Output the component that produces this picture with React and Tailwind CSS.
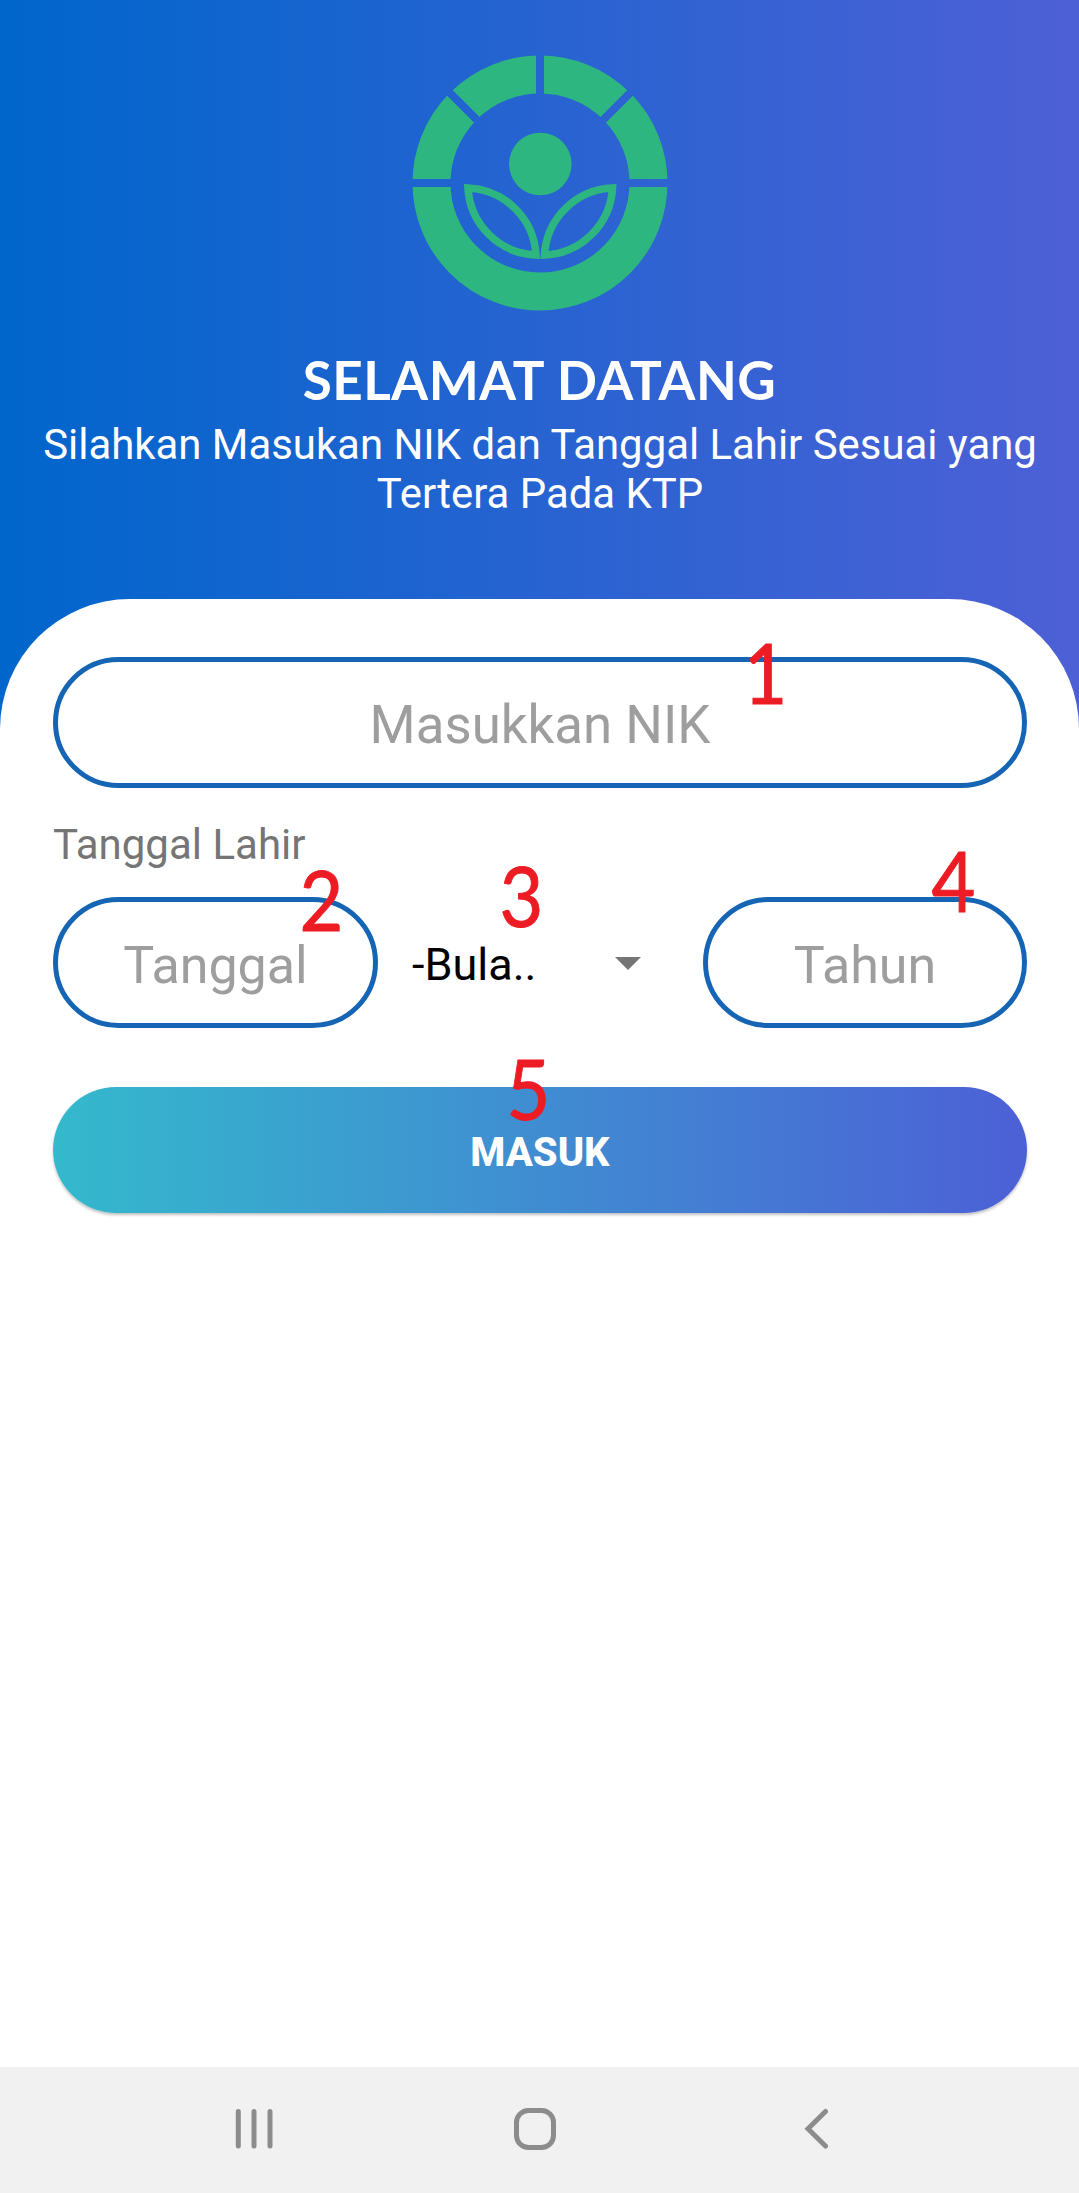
function Logo() {
  return (
    <svg className="block h-64 w-64" viewBox="-128 -128 256 256" aria-label="Logo">
      <mask id="gaps" maskUnits="userSpaceOnUse" x="-128" y="-128" width="256" height="256">
        <rect x="-128" y="-128" width="256" height="256" fill="#fff" />
        <path d="M-128 0H-80M80 0H128M0 -128V-80M-100 -100L-55 -55M100 -100L55 -55" stroke="#000" strokeWidth="8" />
      </mask>
      <circle r="108.5" fill="none" stroke="#2db67f" strokeWidth="38" mask="url(#gaps)" />
      <circle cx="0.3" cy="-19" r="31.3" fill="#2db67f" />
      <g fill="none" stroke="#2db67f" strokeWidth="7.6">
        <path d="M-72 5A71 71 0 0 1 -4 72A71 71 0 0 1 -72 5Z" />
        <path d="M72.5 5A71 71 0 0 0 4.5 72A71 71 0 0 0 72.5 5Z" />
      </g>
    </svg>
  );
}

function Marker({ children, className }) {
  return (
    <span
      className={`absolute z-10 flex h-[62px] w-10 items-center justify-center font-[Lato,sans-serif] text-[84px] leading-none text-[#ed1c24] ${className}`}
    >
      <span className="scale-x-[0.9] [-webkit-text-stroke:1px_#ed1c24]">{children}</span>
    </span>
  );
}

function Field({ label, className, children }) {
  return (
    <div
      className={`relative flex h-[131px] items-center justify-center rounded-full border-[5px] border-[#1565b4] pt-[6px] leading-none text-[#9e9e9e] ${className}`}
    >
      <span>{label}</span>
      {children}
    </div>
  );
}

export default function App() {
  return (
    <div className="flex h-[2193px] w-[1079px] flex-col overflow-hidden bg-white font-[Roboto,sans-serif]">
      <header className="-mb-[140px] flex h-[739px] shrink-0 flex-col items-center bg-linear-to-r/srgb from-[#0066cc] to-[#4e60d6] pt-[55px] text-white">
        <Logo />
        <h1 className="mt-[37px] font-[Lato,sans-serif] text-[53px] leading-[64px] font-bold tracking-[0.5px] whitespace-nowrap">
          SELAMAT DATANG
        </h1>
        <p className="mt-[8px] w-[1020px] pl-[1px] text-center text-[41.9px] leading-[49px]">
          Silahkan Masukan NIK dan Tanggal Lahir Sesuai yang Tertera Pada KTP
        </p>
      </header>

      <main className="flex flex-1 flex-col rounded-t-[130px] bg-white pt-[58px] pr-[52px] pl-[53px]">
        <Field label="Masukkan NIK" className="w-full text-[52.8px]">
          <Marker className="top-[-21px] left-[687px]">1</Marker>
        </Field>
        <div className="mt-[32px] text-[42px] leading-[49px] text-[#757575]">Tanggal Lahir</div>
        <div className="mt-[28px] flex">
          <Field label="Tanggal" className="w-[325px] text-[52px]">
            <Marker className="top-[-34px] left-[243px]">2</Marker>
          </Field>
          <div className="relative flex h-[131px] w-[325px] items-center justify-between pr-[62px] pl-[34px] text-[45px] text-black">
            <span className="pt-[5px]">-Bula..</span>
            <svg className="mt-[2px] h-[13px] w-[26px]" viewBox="0 0 26 13">
              <path d="M0 0H26L13 13Z" fill="#757575" />
            </svg>
            <Marker className="top-[-33px] left-[123px]">3</Marker>
          </div>
          <Field label="Tahun" className="w-[324px] text-[52px]">
            <Marker className="top-[-53px] left-[225px]">4</Marker>
          </Field>
        </div>
        <div className="relative mt-[59px]">
          <button className="flex h-[126px] w-full items-center justify-center rounded-full bg-linear-to-r/srgb from-[#34b9cc] to-[#4c60d6] pt-[6px] text-[40px] leading-none font-extrabold text-white shadow-[0_2px_3px_rgba(0,0,0,0.25)]">
            MASUK
          </button>
          <Marker className="top-[-30px] left-[455px]">5</Marker>
        </div>
      </main>

      <nav className="flex h-[126px] shrink-0 items-center bg-[#f1f1f1] pl-[234px] text-[#8c8c8c]">
        <svg className="h-[44px] w-[40px]" viewBox="0 0 40 44" fill="none" stroke="currentColor" strokeWidth="5" strokeLinecap="round">
          <path d="M4.3 3.5V38M20 3.5V38M36 3.5V38" />
        </svg>
        <svg className="ml-[239px] h-[44px] w-[44px]" viewBox="0 0 44 44" fill="none" stroke="currentColor" strokeWidth="5">
          <rect x="3.5" y="2.5" width="37" height="37" rx="12" />
        </svg>
        <svg className="ml-[246px] h-[44px] w-[28px]" viewBox="0 0 28 44" fill="none" stroke="currentColor" strokeWidth="5" strokeLinecap="round">
          <path d="M22.5 3.5L5 20.8L22.5 38" />
        </svg>
      </nav>
    </div>
  );
}
